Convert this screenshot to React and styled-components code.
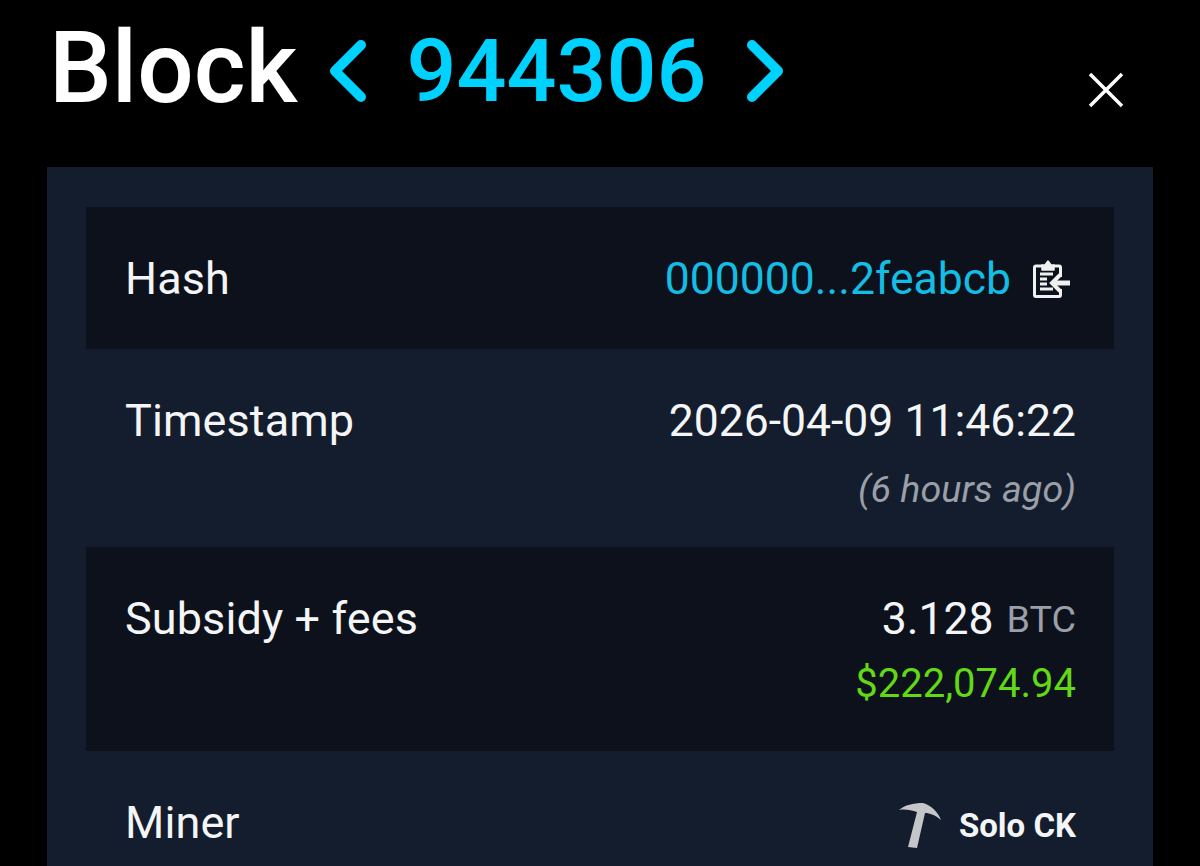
import React from 'react';
import styled, { createGlobalStyle } from 'styled-components';

const GlobalStyle = createGlobalStyle`
    html, body {
        margin: 0;
        height: 100%;
        background: #000;
        overflow: hidden;
    }
`;

const Page = styled.div`
    width: 1200px;
    height: 866px;
    overflow: hidden;
    background: #000;
    font-family: Roboto, "Liberation Sans", sans-serif;
    color: #fff;
`;

const Header = styled.header`
    height: 167px;
    box-sizing: border-box;
    padding: 0 75px 0 49px;
    display: flex;
    align-items: flex-start;
`;

const Title = styled.h1`
    margin: 10px 0 0;
    font-size: 99.5px;
    line-height: 116px;
    font-weight: 500;
`;

const BlockNav = styled.div`
    display: flex;
    align-items: center;
    height: 116px;
    margin: 13px 0 0 30px;
    color: #00d2ff;
`;

const BlockNumber = styled.span`
    font-size: 88px;
    line-height: 116px;
    font-weight: 500;
    margin: 0 37px 0 37px;
`;

const CloseButton = styled.button`
    margin: 71px 0 0 auto;
    padding: 0;
    width: 38px;
    height: 38px;
    border: none;
    background: none;
    color: #fff;
    display: flex;
`;

const Panel = styled.section`
    margin: 0 47px;
    background: #141d2d;
    padding: 40px 39px 0;
`;

const Row = styled.div`
    display: flex;
    justify-content: space-between;
    align-items: flex-start;
    box-sizing: border-box;
    height: ${props => props.height}px;
    padding: ${props => props.top}px 38px 0 39px;
    background: ${props => props.dark ? '#0c111c' : 'transparent'};
`;

const Label = styled.span`
    font-size: 45px;
    line-height: 48px;
    letter-spacing: 0.1px;
    color: #f4f5f6;
`;

const Values = styled.div`
    display: flex;
    flex-direction: column;
    align-items: flex-end;
`;

const ValueLine = styled.div`
    display: flex;
    align-items: center;
    font-size: 44.5px;
    line-height: 48px;
    color: #f4f5f6;
`;

const HashLink = styled.span`
    color: #14bde3;
`;

const CopyIcon = styled.span`
    display: flex;
    margin: 0 5px 0 22px;
    color: #f0f0f0;
`;

const SubNote = styled.span`
    margin-top: 22px;
    font-size: 37.7px;
    line-height: 44px;
    font-style: italic;
    color: #9a9fa8;
`;

const Unit = styled.span`
    margin-left: 13px;
    font-size: 37.7px;
    color: #9a9fa8;
`;

const FiatValue = styled.span`
    margin-top: 17px;
    font-size: 40px;
    line-height: 48px;
    color: #62d915;
`;

const MinerLink = styled.div`
    display: flex;
    align-items: flex-start;
    margin-top: 3px;
    font-size: 33px;
    line-height: 48px;
    font-weight: 700;
    color: #f4f5f6;
`;

const MinerIcon = styled.svg`
    margin-right: 16px;
`;

const Chevron = ({ left }) => (
    <svg width="42" height="66" viewBox="0 0 42 66" fill="none">
        <path
            d={left ? 'M34 7 L8 33 L34 59' : 'M8 7 L34 33 L8 59'}
            stroke="currentColor"
            strokeWidth="10"
            strokeLinecap="round"
            strokeLinejoin="round"
        />
    </svg>
);

const ClipboardIcon = () => (
    <svg width="38" height="40" viewBox="0 0 38 40" fill="none" stroke="currentColor">
        <path d="M10 7 H3 a1.5 1.5 0 0 0 -1.5 1.5 V36 a1.5 1.5 0 0 0 1.5 1.5 H26 a1.5 1.5 0 0 0 1.5 -1.5 V30 M27.5 18 V8.5 A1.5 1.5 0 0 0 26 7 H20" strokeWidth="3" />
        <path d="M9 11 V6 H12 L15 2 L18 6 H21 V11 Z" fill="currentColor" strokeWidth="1.5" strokeLinejoin="round" />
        <path d="M7 15 H20 M7 20 H14 M7 25 H14 M7 30 H20" strokeWidth="3" />
        <path d="M37 24 H20" strokeWidth="5" />
        <path d="M27 16 L19 24 L27 32" strokeWidth="4" />
    </svg>
);

const App = () => (
    <Page>
        <GlobalStyle />
        <Header>
            <Title>Block</Title>
            <BlockNav>
                <Chevron left />
                <BlockNumber>944306</BlockNumber>
                <Chevron />
            </BlockNav>
            <CloseButton aria-label="Close">
                <svg width="38" height="38" viewBox="0 0 38 38" fill="none">
                    <path d="M3 3 L35 35 M35 3 L3 35" stroke="currentColor" strokeWidth="3.5" />
                </svg>
            </CloseButton>
        </Header>

        <Panel>
            <Row dark height={142} top={48}>
                <Label>Hash</Label>
                <ValueLine>
                    <HashLink>000000...2feabcb</HashLink>
                    <CopyIcon><ClipboardIcon /></CopyIcon>
                </ValueLine>
            </Row>

            <Row height={198} top={48}>
                <Label>Timestamp</Label>
                <Values>
                    <ValueLine>2026-04-09 11:46:22</ValueLine>
                    <SubNote>(6 hours ago)</SubNote>
                </Values>
            </Row>

            <Row dark height={204} top={48}>
                <Label>Subsidy + fees</Label>
                <Values>
                    <ValueLine>3.128<Unit>BTC</Unit></ValueLine>
                    <FiatValue>$222,074.94</FiatValue>
                </Values>
            </Row>

            <Row height={115} top={48}>
                <Label>Miner</Label>
                <MinerLink>
                    <MinerIcon width="46" height="48" viewBox="0 0 46 48">
                        <path
                            d="M2 8 C8 3 16 1 26 1 C34 3 41 10 44 18 C38 13 33 11 28 11 L20 46 L11 45 L20 10 C14 8 8 7 2 8 Z"
                            fill="#c4c6c9"
                        />
                    </MinerIcon>
                    Solo CK
                </MinerLink>
            </Row>
        </Panel>
    </Page>
);

export default App;
